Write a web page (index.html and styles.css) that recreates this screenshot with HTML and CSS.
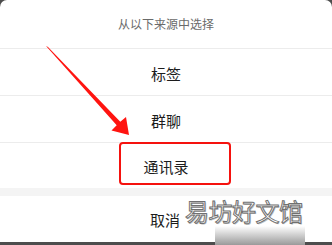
FILE: index.html
```html
<!DOCTYPE html>
<html lang="zh">
<head>
<meta charset="utf-8">
<link rel="stylesheet" href="styles.css">
</head>
<body>
<div class="sheet">
  <div class="title">从以下来源中选择</div>
  <div class="item">标签</div>
  <div class="item">群聊</div>
  <div class="item last">通讯录</div>
  <div class="band"></div>
  <div class="item cancel">取消</div>
</div>
<div class="fade"></div>
<div class="mark">易坊好文馆</div>
<div class="hl"></div>
<svg class="arrow" width="332" height="245" viewBox="0 0 332 245">
  <polygon points="46,46 48,47 120.3,121.8 126,117 129,135 111.5,130.5 116.7,125.2" fill="#ff1410"/>
</svg>
</body>
</html>
```
FILE: styles.css
```css
html, body {
  margin: 0;
  padding: 0;
}
body {
  width: 332px;
  height: 245px;
  background: #4d4d4d;
  overflow: hidden;
  position: relative;
  font-family: "Noto Sans CJK SC", "Noto Sans", sans-serif;
}
.sheet {
  background: #fff;
  border-radius: 7px 7px 0 0;
  height: 242px;
  display: flex;
  flex-direction: column;
}
.title {
  height: 48px;
  border-bottom: 1px solid #ececec;
  display: flex;
  align-items: center;
  justify-content: center;
  font-size: 12px;
  color: #6a6a6a;
  padding-bottom: 2px;
  box-sizing: border-box;
  height: 49px;
}
.item {
  height: 47px;
  box-sizing: border-box;
  border-bottom: 1px solid #ececec;
  display: flex;
  align-items: center;
  justify-content: center;
  font-size: 15px;
  color: #1c1c1c;
  padding-top: 2px;
}
.item.last {
  border-bottom: none;
  height: 45px;
}
.band {
  height: 8px;
  background: #f4f4f4;
}
.item.cancel {
  border-bottom: none;
  height: 46px;
  padding-top: 0;
  padding-right: 2px;
}
.fade {
  position: absolute;
  left: 215px;
  top: 226px;
  width: 90px;
  height: 19px;
  background: linear-gradient(#fff, #9a9a9a);
}
.mark {
  position: absolute;
  left: 185px;
  top: 196px;
  font-size: 24px;
  line-height: 30px;
  color: #fff;
  -webkit-text-stroke: 1px #707070;
  text-shadow: 1px 1px 0 #bdbdbd;
  letter-spacing: -0.5px;
}
.hl {
  position: absolute;
  left: 119px;
  top: 142px;
  width: 112px;
  height: 43px;
  box-sizing: border-box;
  border: 2px solid #f5120e;
  border-radius: 4px;
}
.arrow {
  position: absolute;
  left: 0;
  top: 0;
}
```
